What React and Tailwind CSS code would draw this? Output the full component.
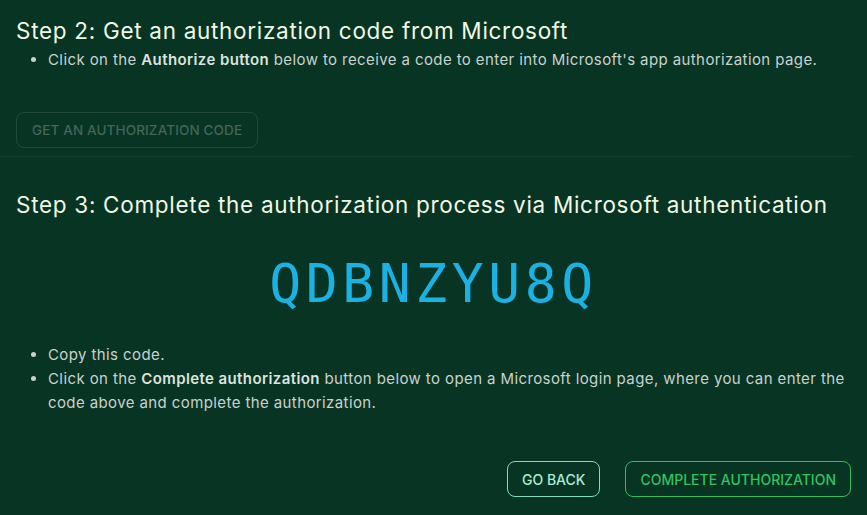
import React from 'react';

const sans = { fontFamily: 'Inter, "Noto Sans", sans-serif' };

const App = () => {
  return (
    <div className="min-h-[515px] w-full bg-[#083424] text-[#c9d2cd]" style={sans}>
      <section className="pl-4 pr-4 pt-[16px]">
        <h2 className="text-[22.5px] leading-[30px] tracking-[0.7px] text-[#f0f8e4]">
          Step 2: Get an authorization code from Microsoft
        </h2>
        <ul className="mt-[2px] list-disc pl-8 text-[15px] leading-6 tracking-[0.4px]">
          <li>
            Click on the <strong className="font-semibold text-[#dce3df]">Authorize button</strong> below to
            receive a code to enter into Microsoft's app authorization page.
          </li>
        </ul>
        <button
          type="button"
          disabled
          className="mt-[40px] h-[36px] rounded-[8px] border border-white/10 px-[15px] text-[13.5px] font-medium uppercase tracking-[0.01em] text-white/25"
        >
          Get an authorization code
        </button>
      </section>

      <div className="mr-4 mt-[8px] border-t border-white/5" />

      <section className="px-4 pt-[33px]">
        <h2 className="text-[22.5px] leading-[30px] tracking-[0.7px] text-[#f0f8e4]">
          Step 3: Complete the authorization process via Microsoft authentication
        </h2>
        <div
          className="mt-[34px] text-center text-[53px] leading-[60px] tracking-[4.6px] text-[#19b2e2]"
          style={{ fontFamily: '"DejaVu Sans Mono", monospace' }}
        >
          QDBNZYU8Q
        </div>
        <ul className="mt-[29px] list-disc pl-8 text-[15px] leading-6 tracking-[0.4px]">
          <li>Copy this code.</li>
          <li>
            Click on the <strong className="font-semibold text-[#dce3df]">Complete authorization</strong> button
            below to open a Microsoft login page, where you can enter the code above and complete the
            authorization.
          </li>
        </ul>
        <div className="mt-[46px] flex justify-end gap-[25px]">
          <button
            type="button"
            className="h-[36px] rounded-[8px] border border-[#7fdcbc] px-[14px] text-[14px] font-medium uppercase text-[#a9ecd4]"
          >
            Go back
          </button>
          <button
            type="button"
            className="h-[36px] rounded-[8px] border border-[#2fbf5c] px-[14px] text-[14px] font-medium uppercase text-[#33c35f]"
          >
            Complete authorization
          </button>
        </div>
      </section>
    </div>
  );
};

export default App;
